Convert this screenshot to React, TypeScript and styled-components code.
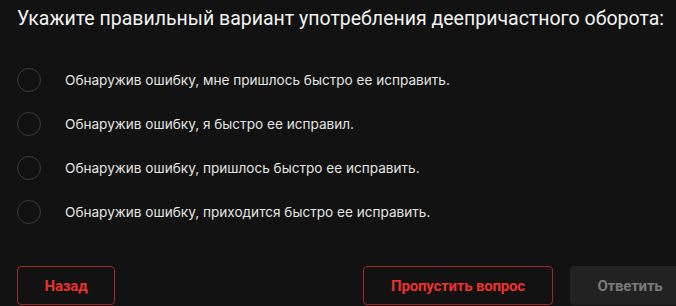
import React from "react";
import styled, { createGlobalStyle } from "styled-components";

const Global = createGlobalStyle`
  html, body { margin: 0; padding: 0; background: #121212; overflow: hidden; }
  body { font-family: Roboto, "Noto Sans", "Liberation Sans", sans-serif; }
`;

const Page = styled.div`
  width: 673px;
  height: 306px;
  padding: 0 0 0 17px;
  box-sizing: content-box;
  display: flex;
  flex-direction: column;
  background: #121212;
`;

const Title = styled.h1`
  margin: 7px 0 0;
  font-size: 19.5px;
  font-weight: 400;
  line-height: 24px;
  color: #f2f2f2;
  white-space: nowrap;
`;

const Options = styled.div`
  display: flex;
  flex-direction: column;
  gap: 20px;
  margin-top: 37px;
`;

const Option = styled.label`
  display: flex;
  align-items: center;
  gap: 24px;
  height: 24px;
  cursor: pointer;
`;

const Radio = styled.span`
  width: 22px;
  height: 22px;
  border-radius: 50%;
  border: 1.5px solid #3c3c3c;
  flex-shrink: 0;
`;

const OptionText = styled.span`
  font-family: Inter, Roboto, sans-serif;
  font-size: 13.6px;
  color: #e4e4e4;
  white-space: nowrap;
`;

const Footer = styled.div`
  display: flex;
  justify-content: space-between;
  align-items: center;
  margin-top: auto;
  margin-bottom: 1px;
`;

const Group = styled.div`
  display: flex;
  gap: 17px;
`;

const Button = styled.button<{ $variant: "outline" | "disabled"; $w: number }>`
  width: ${(p) => p.$w}px;
  height: 39px;
  border-radius: 4px;
  font-family: Roboto, "Liberation Sans", sans-serif;
  font-size: 15px;
  font-weight: 700;
  letter-spacing: -0.2px;
  box-sizing: border-box;
  cursor: pointer;
  background: ${(p) => (p.$variant === "outline" ? "#121212" : "#222222")};
  color: ${(p) => (p.$variant === "outline" ? "#e8332f" : "#7a7a7a")};
  border: 1px solid ${(p) => (p.$variant === "outline" ? "#a3262a" : "#222222")};
`;

const options = [
  "Обнаружив ошибку, мне пришлось быстро ее исправить.",
  "Обнаружив ошибку, я быстро ее исправил.",
  "Обнаружив ошибку, пришлось быстро ее исправить.",
  "Обнаружив ошибку, приходится быстро ее исправить.",
];

export default function App() {
  return (
    <>
      <Global />
      <Page>
        <Title>Укажите правильный вариант употребления деепричастного оборота:</Title>
        <Options>
          {options.map((o) => (
            <Option key={o}>
              <Radio />
              <OptionText>{o}</OptionText>
            </Option>
          ))}
        </Options>
        <Footer>
          <Button $variant="outline" $w={98}>Назад</Button>
          <Group>
            <Button $variant="outline" $w={190}>Пропустить вопрос</Button>
            <Button $variant="disabled" $w={120}>Ответить</Button>
          </Group>
        </Footer>
      </Page>
    </>
  );
}
